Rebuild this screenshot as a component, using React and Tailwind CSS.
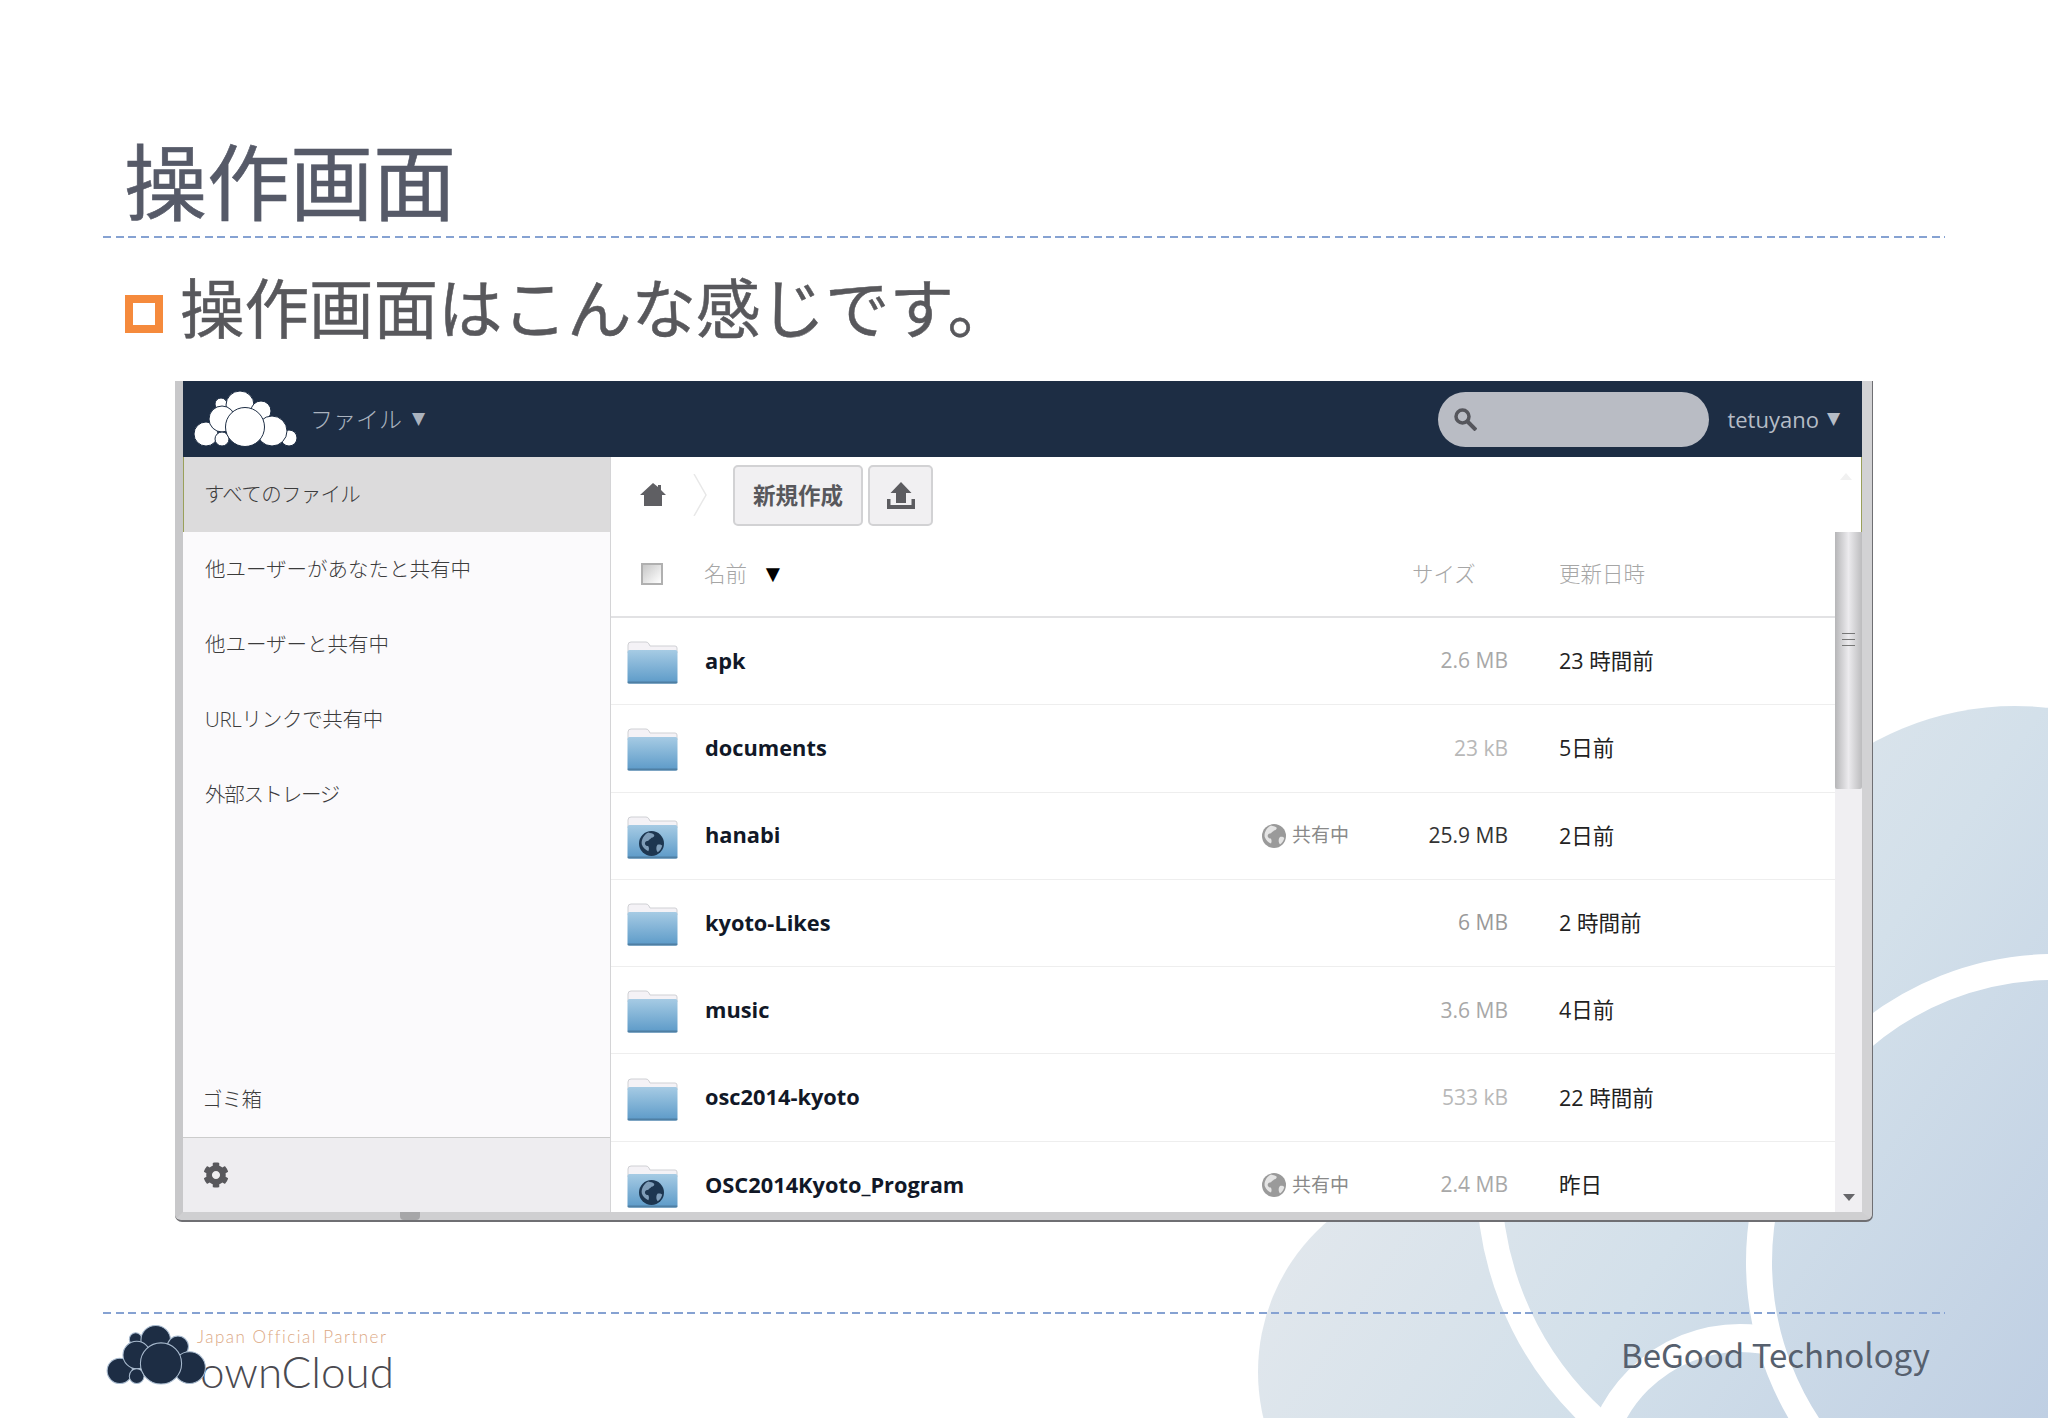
import { FaCog } from 'react-icons/fa';

const files = [
    { name: 'apk', size: '2.6 MB', sizeColor: 'text-[#a8a8a8]', date: '23 時間前' },
    { name: 'documents', size: '23 kB', sizeColor: 'text-[#b8b8b8]', date: '5日前' },
    { name: 'hanabi', size: '25.9 MB', sizeColor: 'text-[#333333]', date: '2日前', shared: true },
    { name: 'kyoto-Likes', size: '6 MB', sizeColor: 'text-[#999999]', date: '2 時間前' },
    { name: 'music', size: '3.6 MB', sizeColor: 'text-[#a8a8a8]', date: '4日前' },
    { name: 'osc2014-kyoto', size: '533 kB', sizeColor: 'text-[#b8b8b8]', date: '22 時間前' },
    { name: 'OSC2014Kyoto_Program', size: '2.4 MB', sizeColor: 'text-[#a8a8a8]', date: '昨日', shared: true },
];

const navItems = [
    { label: '他ユーザーがあなたと共有中', tracking: '' },
    { label: '他ユーザーと共有中', tracking: '' },
    { label: 'URLリンクで共有中', tracking: 'tracking-[-0.3px]' },
    { label: '外部ストレージ', tracking: 'tracking-[-1.300px]' },
];

const cloudCircles = [
    [-24, -23, 6],
    [-5, -22, 14],
    [16, -16, 10],
    [44, 11, 8],
    [27, 4, 15],
    [-39, 7, 12],
    [-23, -8, 13],
    [-23, 12, 7],
    [0, 0, 19.5],
];

const CloudLogo = ({ fill, stroke, className, noTail }) => (
    <svg viewBox="-53 -38 106 60" className={className}>
        {cloudCircles
            .filter(([cx]) => !(noTail && cx === 44))
            .map(([cx, cy, r]) => (
                <circle key={`${cx}-${cy}`} cx={cx} cy={cy} r={r} fill={fill} stroke={stroke} strokeWidth="1" />
            ))}
    </svg>
);

const DashedRule = () => (
    <div className="mx-[103px] h-[2px] bg-[repeating-linear-gradient(90deg,#86a2d2_0_8px,transparent_8px_12.7px)]" />
);

// big washed out ownCloud logo behind the slide
const Backdrop = () => (
    <svg viewBox="0 0 2048 1418" className="absolute inset-0 w-[2048px] h-[1418px]">
        <defs>
            <linearGradient id="blob" gradientUnits="userSpaceOnUse" x1="1300" y1="900" x2="2048" y2="1418">
                <stop offset="0" stopColor="#e9ebee" />
                <stop offset="0.55" stopColor="#d3e0ea" />
                <stop offset="1" stopColor="#bfcfe3" />
            </linearGradient>
        </defs>
        <circle cx="1456" cy="1372" r="198" fill="url(#blob)" />
        <circle cx="1814" cy="1179" r="325" fill="url(#blob)" stroke="#ffffff" strokeWidth="25" />
        <circle cx="2015" cy="1000" r="294" fill="url(#blob)" />
        <circle cx="1740" cy="1482" r="144" fill="url(#blob)" stroke="#ffffff" strokeWidth="28" />
        <circle cx="2054" cy="1262" r="295" fill="url(#blob)" stroke="#ffffff" strokeWidth="26" />
    </svg>
);

const Globe = ({ base, land, className }) => (
    <svg viewBox="0 0 24 24" className={className}>
        <circle cx="12" cy="12" r="12" fill={base} />
        <path d="M9 1.500c2 .8 4 .6 5.500 2 .8 1.600-1 2.600-2.500 3-.6 1.400-2.400 1.200-3 2.800-1.400.2-3 .6-3.300 2.200-.3 1.800 1.300 3 3.100 3 1 1.400 1 3.200 .2 5-2.800-1.200-5.300-3.600-6.300-6.500C1.800 8.800 4.800 3.200 9 1.500z" fill={land} />
        <path d="M18 13c1.800-.4 3.400 0 4.300 1-.6 2.800-2.200 5-4.300 6.500-1-1.300-1.500-3-1.300-4.500 .1-1.100 .4-2.200 1.300-3z" fill={land} />
    </svg>
);

const FolderIcon = ({ shared, id }) => (
    <div className="relative w-[51px] h-[43px] mt-[3px]">
        <svg viewBox="0 0 51 43" className="w-[51px] h-[43px]">
            <defs>
                <linearGradient id={id} x1="0" y1="0" x2="0" y2="1">
                    <stop offset="0" stopColor="#a6cbe4" />
                    <stop offset="1" stopColor="#5c9ac8" />
                </linearGradient>
            </defs>
            <path d="M1 12V4q0-3 3-3h15q2 0 3 2l1 2h25q2 0 2 2v5z" fill="#f4f2f6" stroke="#cfd0d4" strokeWidth="1" />
            <rect x="0.5" y="9" width="50" height="33.500" rx="2" fill={`url(#${id})`} />
            <rect x="0.5" y="40.500" width="50" height="2" rx="1" fill="#4f7fa3" />
        </svg>
        {shared && <Globe base="#1d3650" land="#7f9db8" className="absolute left-[12px] top-[15px] w-[25px] h-[25px]" />}
    </div>
);

const FileRow = ({ file }) => (
    <div className="grid grid-cols-[93px_558px_150px_96px_1fr] items-center h-[87.3px] shrink-0 border-b border-[#eeeeee]">
        <div className="pl-[16px]">
            <FolderIcon shared={file.shared} id={`folder-${file.name}`} />
        </div>
        <span className="pl-[1px] text-[21.800px] font-bold text-[#111827]">{file.name}</span>
        <div>
            {file.shared && (
                <div className="flex items-center gap-[6px] text-[19px] text-[#8a8a8a]">
                    <Globe base="#9a9a9a" land="#e4e4e4" className="w-[24px] h-[24px]" />
                    共有中
                </div>
            )}
        </div>
        <span className={`text-[21px] text-right whitespace-nowrap ${file.sizeColor}`}>{file.size}</span>
        <span className="pl-[51px] text-[21.500px] text-[#222222]">{file.date}</span>
    </div>
);

const Sidebar = () => (
    <aside className="w-[428px] flex flex-col border-r border-[#d4d4d6] bg-[#fbfafc] text-[20.500px] font-light text-[#3c3c3c]">
        <div className="h-[75px] flex items-center pl-[20px] bg-[#dcdbdc] border-l border-[#9aa05a] tracking-[-0.7px]">すべてのファイル</div>
        {navItems.map((item) => (
            <div key={item.label} className={`h-[75px] flex items-center pl-[22px] ${item.tracking}`}>{item.label}</div>
        ))}
        <div className="mt-auto h-[75px] flex items-center pl-[19px] tracking-[-0.8px]">ゴミ箱</div>
        <div className="h-[75px] flex items-center pl-[20px] bg-[#eeedf0] border-t border-[#cccccc]">
            <FaCog className="w-[26px] h-[26px] text-[#58585c]" />
        </div>
    </aside>
);

const Toolbar = () => (
    <div className="h-[75px] shrink-0 flex items-center pl-[29px] bg-white border-r border-[#9aa05a]">
        <svg viewBox="0 0 26 23" className="w-[26px] h-[23px] fill-[#5f5f63]">
            <path d="M13 0l5 4V2h3v5l5 5h-4v11H4V12H0z" />
        </svg>
        <svg viewBox="0 0 14 42" className="ml-[27px] w-[14px] h-[42px] fill-none stroke-[#e8e8e8]">
            <path d="M1 0l12 21L1 42" strokeWidth="1.500" />
        </svg>
        <button className="ml-[26px] mt-[2px] w-[130px] h-[61px] rounded-[5px] border-2 border-[#d2d2d4] bg-[#f1f0f2] text-[22.500px] font-bold text-[#58585c]">新規作成</button>
        <button className="ml-[5px] mt-[2px] w-[65px] h-[61px] rounded-[5px] border-2 border-[#d2d2d4] bg-[#f1f0f2] flex items-center justify-center">
            <svg viewBox="0 0 28 27" className="w-[28px] h-[27px] fill-[#5c5c60]">
                <path d="M14 0l10.500 11H19v10H9V11H3.500z" />
                <path d="M0 17h3.500v6h21v-6H28v10H0z" />
            </svg>
        </button>
        <svg viewBox="0 0 12 7" className="ml-auto mr-[9px] mb-[36px] w-[12px] h-[7px] fill-[#f1f1f1]">
            <path d="M6 0l6 7H0z" />
        </svg>
    </div>
);

const TableHead = () => (
    <div className="grid grid-cols-[93px_558px_150px_96px_1fr] items-center h-[86px] shrink-0 border-b-2 border-[#e2e2e4] text-[21.500px] font-light text-[#a6a6a6]">
        <div className="pl-[30px]">
            <div className="w-[22px] h-[22px] border-2 border-[#b0b0b0] bg-gradient-to-br from-[#c8c8c8] to-white" />
        </div>
        <div className="flex items-center gap-[14px]">
            名前
            <span className="text-[24px] leading-none text-black font-['DejaVu_Sans',sans-serif]">▼</span>
        </div>
        <div />
        <span className="text-right pr-[35px] whitespace-nowrap">サイズ</span>
        <span className="pl-[51px]">更新日時</span>
    </div>
);

const Scrollbar = () => (
    <div className="w-[27px] shrink-0 flex flex-col items-center bg-[#f0eff2]">
        <div className="w-full h-[257px] flex items-center justify-center pb-[42px] bg-gradient-to-r from-[#b6b6b8] via-[#ecebee] to-[#bcbcbe] rounded-b-[2px]">
            <div className="w-[13px] h-[13px] flex flex-col justify-between">
                <div className="h-px bg-[#777777]" />
                <div className="h-px bg-[#777777]" />
                <div className="h-px bg-[#777777]" />
            </div>
        </div>
        <svg viewBox="0 0 12 7" className="mt-auto mb-[11px] w-[12px] h-[7px] fill-[#66666a]">
            <path d="M0 0h12L6 7z" />
        </svg>
    </div>
);

const Window = () => (
    <div className="relative ml-[175px] w-[1698px] h-[841px] pb-[2px] pr-[1px] bg-[#6f6f73] rounded-b-[7px]">
        <div className="h-full flex flex-col border-l-[8px] border-r-[10px] border-b-[8px] border-l-[#c8c8ca] border-r-[#d2d2d4] border-b-[#cfcfd1] rounded-b-[6px] bg-white">
            <div className="h-[76px] shrink-0 flex items-center bg-[#1d2d44] pl-[9px] pr-[22px]">
                <CloudLogo fill="#ffffff" stroke="#1d2d44" className="w-[106px] h-[60px]" />
                <span className="ml-[12px] text-[23px] font-light text-[#aab3bf]">ファイル</span>
                <span className="ml-[10px] text-[17px] text-[#aab3bf] font-['DejaVu_Sans',sans-serif]">▼</span>
                <div className="ml-auto w-[271px] h-[55px] rounded-full bg-[#b9bcc4] flex items-center pl-[15px]">
                    <svg viewBox="0 0 24 24" className="w-[24px] h-[24px] fill-none stroke-[#55565c]">
                        <circle cx="9.500" cy="9.500" r="6.500" strokeWidth="3.500" />
                        <path d="M14.500 14.500L23 23" strokeWidth="4" />
                    </svg>
                </div>
                <span className="ml-[18px] text-[22px] text-[#b5bcc6]">tetuyano</span>
                <span className="ml-[8px] text-[17px] text-[#b5bcc6] font-['DejaVu_Sans',sans-serif]">▼</span>
            </div>
            <div className="flex-1 flex min-h-0">
                <Sidebar />
                <div className="flex-1 flex flex-col min-w-0">
                    <Toolbar />
                    <div className="flex-1 flex min-h-0">
                        <div className="flex-1 flex flex-col overflow-hidden">
                            <TableHead />
                            {files.map((file) => (
                                <FileRow key={file.name} file={file} />
                            ))}
                        </div>
                        <Scrollbar />
                    </div>
                </div>
            </div>
        </div>
        <div className="absolute left-[225px] bottom-[2px] w-[20px] h-[8px] bg-[#a6a6a8] rounded-b-[4px]" />
    </div>
);

const Footer = () => (
    <footer className="mt-auto">
        <DashedRule />
        <div className="flex items-center justify-between h-[104px] pl-[105px] pr-[118px] pb-[22px]">
            <div className="flex items-center">
                <CloudLogo noTail fill="#1d2d44" stroke="#a9bbcf" className="relative z-10 w-[112px] h-[64px]" />
                <div className="flex flex-col mt-[10px] -ml-[20px] font-['Lato',sans-serif] font-light leading-none">
                    <span className="mb-[4px] text-[17px] tracking-[1.500px] text-[#dca883] whitespace-nowrap">Japan Official Partner</span>
                    <span className="pl-[3px] text-[44px] text-[#4a4a50]">ownCloud</span>
                </div>
            </div>
            <span className="text-[33px] text-[#56606e] font-['Noto_Sans_CJK_JP',sans-serif]">BeGood Technology</span>
        </div>
    </footer>
);

const App = () => (
    <div className="relative w-[2048px] h-[1418px] overflow-hidden bg-white font-['Open_Sans','Noto_Sans_CJK_JP',sans-serif]">
        <Backdrop />
        <div className="relative h-full flex flex-col">
            <h1 className="h-[236px] flex items-end pl-[124px] pb-[10px] text-[83px] leading-[1.15] font-normal text-[#565a68] [-webkit-text-stroke:0.6px_#565a68] font-['Noto_Sans_CJK_JP',sans-serif]">操作画面</h1>
            <DashedRule />
            <div className="h-[143px] flex items-center pl-[125px] font-['Noto_Sans_CJK_JP',sans-serif]">
                <span className="mt-[9px] w-[38px] h-[38px] border-[8px] border-[#f58a3c] bg-white" />
                <p className="ml-[17px] mb-[8px] text-[64.500px] leading-none text-[#58585c] [-webkit-text-stroke:0.5px_#58585c]">操作画面はこんな感じです。</p>
            </div>
            <Window />
            <Footer />
        </div>
    </div>
);

export default App;
